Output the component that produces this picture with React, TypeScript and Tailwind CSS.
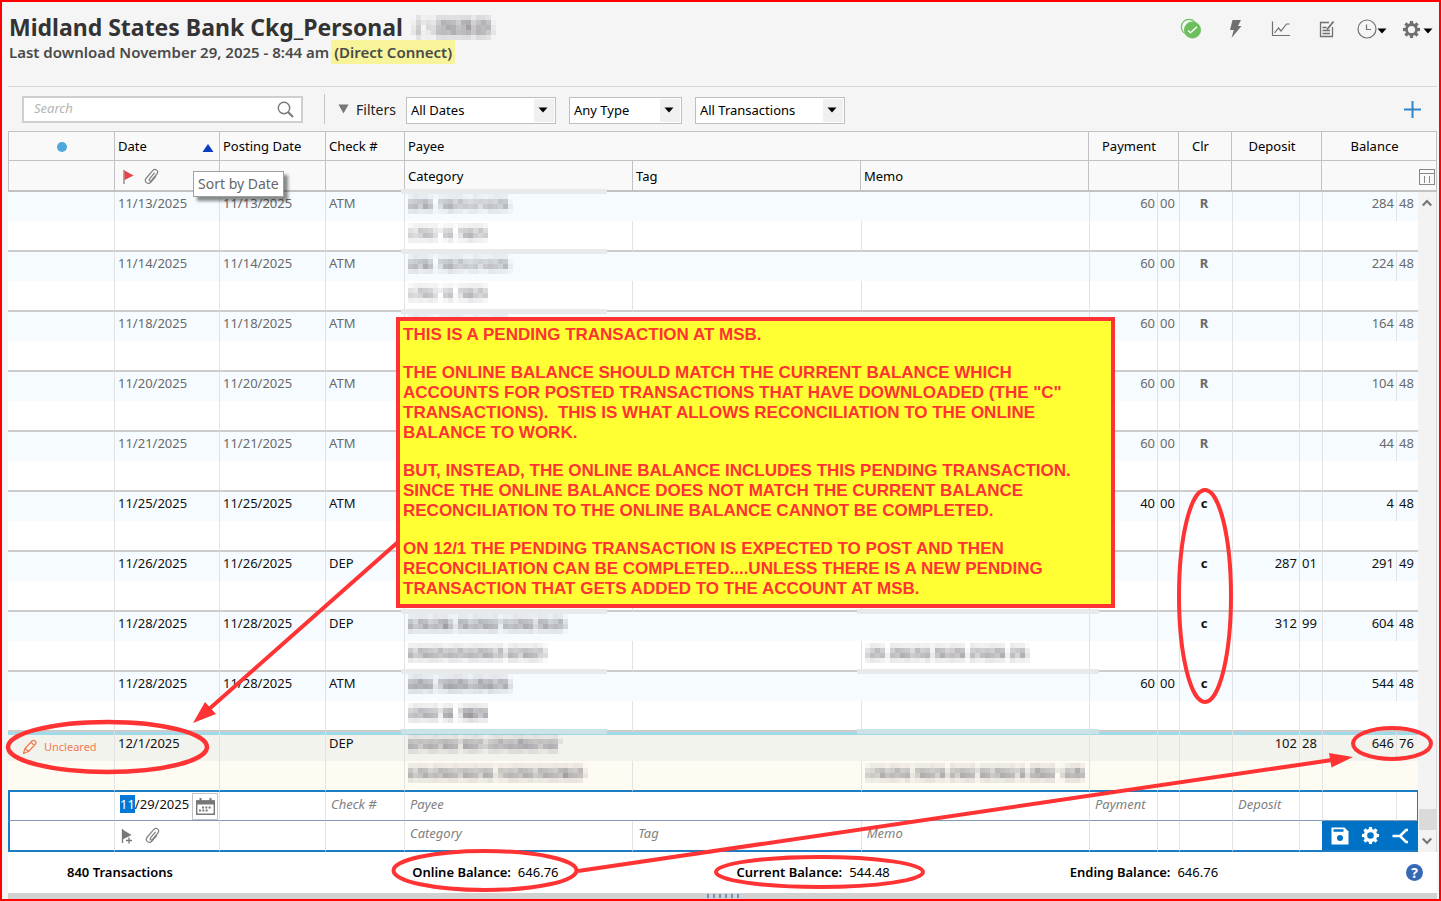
import { useEffect, useRef } from "react";
import type { ReactNode } from "react";

type Transaction = {
  date: string;
  posting: string;
  check: string;
  payee: string;
  category: string;
  memo?: string;
  maskMemo?: boolean;
  payment?: [string, string];
  clr: string;
  deposit?: [string, string];
  balance: [string, string];
};

// one digit per tile, higher is darker
const ATM_PAYEE = "454541345443343344441";
const ATM_CATEGORY = "3344431341345443";

const transactions: Transaction[] = [
  { date: "11/13/2025", posting: "11/13/2025", check: "ATM", payee: ATM_PAYEE, category: ATM_CATEGORY, payment: ["60", "00"], clr: "R", balance: ["284", "48"] },
  { date: "11/14/2025", posting: "11/14/2025", check: "ATM", payee: ATM_PAYEE, category: ATM_CATEGORY, payment: ["60", "00"], clr: "R", balance: ["224", "48"] },
  { date: "11/18/2025", posting: "11/18/2025", check: "ATM", payee: ATM_PAYEE, category: ATM_CATEGORY, payment: ["60", "00"], clr: "R", balance: ["164", "48"] },
  { date: "11/20/2025", posting: "11/20/2025", check: "ATM", payee: ATM_PAYEE, category: ATM_CATEGORY, payment: ["60", "00"], clr: "R", balance: ["104", "48"] },
  { date: "11/21/2025", posting: "11/21/2025", check: "ATM", payee: ATM_PAYEE, category: ATM_CATEGORY, payment: ["60", "00"], clr: "R", balance: ["44", "48"] },
  { date: "11/25/2025", posting: "11/25/2025", check: "ATM", payee: ATM_PAYEE, category: ATM_CATEGORY, payment: ["40", "00"], clr: "c", balance: ["4", "48"] },
  { date: "11/26/2025", posting: "11/26/2025", check: "DEP", payee: ATM_PAYEE, category: ATM_CATEGORY, clr: "c", deposit: ["287", "01"], balance: ["291", "49"] },
  { date: "11/28/2025", posting: "11/28/2025", check: "DEP", payee: "54554556425545555524455553554552", category: "5455555455545555545255455542", memo: "355415555454525545551544555515452", maskMemo: true, clr: "c", deposit: ["312", "99"], balance: ["604", "48"] },
  { date: "11/28/2025", posting: "11/28/2025", check: "ATM", payee: "566552456665456565552", category: "4555552561367655", maskMemo: true, payment: ["60", "00"], clr: "c", balance: ["544", "48"] },
  { date: "12/1/2025", posting: "", check: "DEP", payee: "5544554555255542455455655544551", category: "545545555545554552445555545555565551", memo: "344545545245554525455525545555352565551".slice(0, 39) + "25564", maskMemo: true, clr: "", deposit: ["102", "28"], balance: ["646", "76"] },
];

const TILE = 5;

function Mosaic({ pattern, rows = [0.25, 0.85, 1, 0.3] }: { pattern: string; rows?: number[] }) {
  const tiles = pattern.split("").map(Number);
  return (
    <svg width={tiles.length * TILE} height={rows.length * TILE} className="block" aria-hidden="true" shapeRendering="crispEdges">
      {rows.map((strength, y) =>
        tiles.map((level, x) => (
          <rect
            key={`${x}-${y}`}
            x={x * TILE}
            y={y * TILE}
            width={TILE}
            height={TILE}
            fill="#5a5560"
            opacity={Math.max(0, (level + ((x * 3 + y * 5) % 4) * 0.5 - 1) * 0.085 * strength)}
          />
        ))
      )}
    </svg>
  );
}

function Caret({ className }: { className?: string }) {
  return (
    <svg width="10" height="6" viewBox="0 0 10 6" className={className} aria-hidden="true">
      <path d="M0.5 0.5h9L5 5.5z" fill="currentColor" />
    </svg>
  );
}

function Gear({ size, width = 3 }: { size: number; width?: number }) {
  return (
    <svg width={size} height={size} viewBox="0 0 20 20" stroke="currentColor" fill="none" aria-hidden="true">
      <circle cx="10" cy="10" r="5.3" strokeWidth={width} />
      {[0, 45, 90, 135, 180, 225, 270, 315].map((deg) => (
        <path key={deg} d="M10 1v3.5" strokeWidth="3.4" transform={`rotate(${deg} 10 10)`} />
      ))}
    </svg>
  );
}

function Clip() {
  return (
    <svg width="15" height="17" viewBox="0 0 15 17" fill="none" stroke="#808080" strokeWidth="1.2" strokeLinecap="round" aria-hidden="true">
      <path d="M10.3 5.2L5.6 10.800c-1.200 1.600 0.700 3 1.900 1.600L12.900 6c2.300-3-1.600-6.300-4.200-3.400L2.300 10c-2.900 3.600 1.700 7.400 4.700 4L11.500 8.800" />
    </svg>
  );
}

function FilterSelect({ label, options, width }: { label: string; options: string[]; width: string }) {
  return (
    <div className={`relative ${width}`}>
      <select aria-label={label} className="block h-[27px] w-full appearance-none border border-[#bfbfbf] bg-white pl-1 text-[13px] leading-5 text-black">
        {options.map((o) => (
          <option key={o}>{o}</option>
        ))}
      </select>
      <span className="pointer-events-none absolute inset-y-[2px] right-[2px] flex w-5 items-center justify-center bg-[#f0f0f0]">
        <Caret className="mr-px" />
      </span>
    </div>
  );
}

function ToolButton({ label, children }: { label: string; children: ReactNode }) {
  return (
    <button type="button" aria-label={label} className="flex h-6 items-center text-[#707070]">
      {children}
    </button>
  );
}

function Header() {
  return (
    <header className="flex h-[84px] justify-between pt-3 pr-[6px] pl-[7px]">
      <div>
        <h1 className="flex h-[26px] items-center text-[23px] leading-7 font-bold text-[#333]">
          Midland States Bank Ckg_Personal
          <span className="ml-2 inline-block">
            <Mosaic pattern="14122566656746651" rows={[0.3, 0.75, 0.85, 0.8, 0.3]} />
          </span>
        </h1>
        <p className="flex text-[15px] leading-6 font-semibold text-[#4a4a4a]">
          Last download November 29, 2025 - 8:44 am
          <span className="ml-[2px] bg-[#f7f49a] px-[3px]">(Direct Connect)</span>
        </p>
      </div>
      <div className="flex items-start pt-[3px]">
        <div className="mr-[27px]">
          <ToolButton label="Status">
            <svg width="22" height="22" viewBox="0 0 22 22" fill="none" aria-hidden="true">
              <circle cx="9" cy="9" r="7.700" stroke="#6cbf5b" strokeWidth="1.200" />
              <circle cx="12.500" cy="12" r="8.500" fill="#6cbf5b" />
              <path d="M8 12.500l2.500 2.300 6.500-6" stroke="#fff" strokeWidth="1.400" />
            </svg>
          </ToolButton>
        </div>
        <div className="mr-[29px]">
          <ToolButton label="Update now">
            <svg width="13" height="20" viewBox="0 0 13 20" fill="currentColor" aria-hidden="true">
              <path d="M3.500 1h8.500L9 7h3.500L2.500 19l2.300-8H1z" />
            </svg>
          </ToolButton>
        </div>
        <div className="mr-[28px]">
          <ToolButton label="Reports">
            <svg width="20" height="16" viewBox="0 0 20 16" fill="none" stroke="currentColor" strokeWidth="1.200" aria-hidden="true">
              <path d="M1.500 0.500v14h17.500M3.500 12l4-5 2.500 3 5.500-7h3" />
            </svg>
          </ToolButton>
        </div>
        <div className="mr-[22px]">
          <ToolButton label="Notes">
            <svg width="16" height="18" viewBox="0 0 16 18" fill="none" stroke="currentColor" strokeWidth="1.300" aria-hidden="true">
              <path d="M10 2.500H1.500v14h12V7M3.500 7.500h4M3.500 10.500h7.500M3.500 13.500h7.500" />
              <path d="M8 9.500l6.500-8" strokeWidth="1.800" />
            </svg>
          </ToolButton>
        </div>
        <div className="mr-[15px]">
          <ToolButton label="Reminders">
            <svg width="20" height="20" viewBox="0 0 20 20" fill="none" stroke="currentColor" strokeWidth="1.200" aria-hidden="true">
              <circle cx="10" cy="10" r="9" />
              <path d="M9.500 5.500v5h4.500" />
            </svg>
            <Caret className="mt-1 text-black" />
          </ToolButton>
        </div>
        <ToolButton label="Account actions">
          <Gear size={19} />
          <Caret className="mt-1 ml-[2px] text-black" />
        </ToolButton>
      </div>
    </header>
  );
}

function Toolbar() {
  return (
    <div className="flex h-[45px] items-center border-t border-[#d6d6d6] pr-4 pl-[14px]">
      <div className="flex h-[27px] w-[281px] items-center border-2 border-[#cfcfcf] bg-white pr-[7px] pl-[10px]">
        <input type="text" aria-label="Search" placeholder="Search" className="min-w-0 flex-1 text-[13px] outline-none placeholder:text-[#b4b4b4] placeholder:italic" />
        <svg width="17" height="17" viewBox="0 0 17 17" fill="none" stroke="#777" aria-hidden="true">
          <circle cx="7" cy="7" r="5.700" strokeWidth="1.400" />
          <path d="M11 11l5 5" strokeWidth="2" />
        </svg>
      </div>
      <div className="ml-[21px] h-[30px] w-px bg-[#c4c4c4]" />
      <button type="button" className="mr-[10px] ml-[13px] flex items-center gap-[7px] text-[14px] text-[#222]">
        <svg width="11" height="10" viewBox="0 0 11 10" aria-hidden="true">
          <path d="M0.500 0.500h10L5.500 9.500z" fill="#777" />
        </svg>
        Filters
      </button>
      <div className="flex gap-[13px] pt-[2px]">
        <FilterSelect label="Dates" options={["All Dates"]} width="w-[150px]" />
        <FilterSelect label="Type" options={["Any Type"]} width="w-[113px]" />
        <FilterSelect label="Transactions" options={["All Transactions"]} width="w-[150px]" />
      </div>
      <button type="button" aria-label="Add transaction" className="ml-auto">
        <svg width="17" height="17" viewBox="0 0 17 17" stroke="#2f86cc" strokeWidth="2" aria-hidden="true">
          <path d="M8.500 0v17M0 8.500h17" />
        </svg>
      </button>
    </div>
  );
}

function Columns({ wideBalance }: { wideBalance?: boolean }) {
  return (
    <colgroup>
      <col className="w-[106px]" />
      <col className="w-[105px]" />
      <col className="w-[106px]" />
      <col className="w-[79px]" />
      <col />
      <col />
      <col />
      <col className="w-[68px]" />
      <col className="w-[22px]" />
      <col className="w-[53px]" />
      <col className="w-[67px]" />
      <col className="w-[23px]" />
      <col className="w-[74px]" />
      <col className={wideBalance ? "w-[41px]" : "w-[22px]"} />
    </colgroup>
  );
}

const headCell = "h-[29px] border-l border-t border-[#c2c2c2] bg-[#f9f9f9] px-[3px] pt-[2px] font-normal";

function RegisterHead() {
  return (
    <table className="w-full table-fixed border-separate border-spacing-0 border-r border-[#c2c2c2] text-left text-[13px] text-black">
      <Columns wideBalance />
      <thead>
        <tr>
          <th aria-label="Status" className={headCell}>
            <span className="mx-auto block size-[10px] rounded-full bg-[#4fa8dc]" />
          </th>
          <th className={`${headCell} relative`}>
            <button type="button" className="flex w-full items-center justify-between pr-[2px]">
              Date
              <svg width="12" height="8" viewBox="0 0 12 8" className="mt-[2px]" aria-hidden="true">
                <path d="M0.500 8L6 0l5.500 8z" fill="#0a3cc0" />
              </svg>
            </button>
            <span role="tooltip" className="absolute top-[39px] left-[78px] z-20 border border-[#a0a0a0] bg-white px-1 text-[14px] leading-6 whitespace-nowrap text-[#666] shadow-[4px_4px_3px_rgba(0,0,0,0.45)]">
              Sort by Date
            </span>
          </th>
          <th className={headCell}>Posting Date</th>
          <th className={headCell}>Check #</th>
          <th className={headCell} colSpan={3}>Payee</th>
          <th className={`${headCell} pr-3 text-center`} colSpan={2}>Payment</th>
          <th className={`${headCell} pr-3 text-center`}>Clr</th>
          <th className={`${headCell} pr-3 text-center`} colSpan={2}>Deposit</th>
          <th className={`${headCell} pr-3 text-center`} colSpan={2}>Balance</th>
        </tr>
        <tr className="[&>th]:h-8 [&>th]:border-b-2">
          <th className={headCell} />
          <th className={headCell}>
            <span className="flex items-center gap-[10px] pl-[5px]">
              <svg width="11" height="15" viewBox="0 0 11 15" aria-hidden="true">
                <path d="M1 1v14" stroke="#888" strokeWidth="1.400" />
                <path d="M1.500 1.500L10.500 6.500l-9 4.500z" fill="#e8434a" />
              </svg>
              <Clip />
            </span>
          </th>
          <th className={headCell} />
          <th className={headCell} />
          <th className={headCell}>Category</th>
          <th className={headCell}>Tag</th>
          <th className={headCell}>Memo</th>
          <th className={headCell} colSpan={2} />
          <th className={headCell} />
          <th className={headCell} colSpan={2} />
          <th className={`${headCell} pr-px`} colSpan={2}>
            <button type="button" aria-label="Choose columns" className="ml-auto block">
              <svg width="16" height="16" viewBox="0 0 16 16" fill="none" stroke="#888" shapeRendering="crispEdges" aria-hidden="true">
                <path d="M0.500 0.500h15v15H0.500zM1 4.500h14M5.500 6.500v7M10.500 6.500v7" />
              </svg>
            </button>
          </th>
        </tr>
      </thead>
    </table>
  );
}

function TransactionRows({ item, pending, last }: { item: Transaction; pending: boolean; last: boolean }) {
  const cleared = item.clr === "R";
  const top = pending ? "bg-[#f3f3ee] [&>td]:shadow-[inset_0_3px_0_#9fdae8]" : "bg-[#f5fbfe]";
  const bottom = pending ? "bg-[#fefbf2]" : "bg-white";
  const line = last ? "[&>td]:border-b-[#1b7cc4]" : "[&>td]:border-b-[#cccccc]";
  const mask = pending ? "bg-[#cbe3e8]" : "bg-[#e7e9eb]";
  const cell = "border-l border-[#e2e2e2] align-top";
  return (
    <>
      <tr className={`h-[29px] leading-[22px] ${top} ${cleared ? "text-[#6a6a6a]" : "text-[#111]"}`}>
        <td className="align-middle">
          {pending && (
            <span className="flex items-center gap-[6px] pl-[14px] text-[11px] text-[#f47a52]">
              <svg width="16" height="16" viewBox="0 0 16 16" fill="none" stroke="currentColor" strokeWidth="1.300" strokeLinejoin="round" aria-hidden="true">
                <path d="M1.500 14.500l1.500-5 7-7.500c2-1.800 5 0.800 3.500 3L6.500 12.500zM3 9.500l3.500 3M9 3.500l3.500 3" />
              </svg>
              Uncleared
            </span>
          )}
        </td>
        <td className={`${cell} pl-[3px]`}>{item.date}</td>
        <td className={`${cell} pl-[3px]`}>{item.posting}</td>
        <td className={`${cell} pl-[3px]`}>{item.check}</td>
        <td className={`${cell} relative pt-[2px] pl-[3px]`} colSpan={3}>
          <span className={`absolute top-[-3px] left-[-4px] h-[5px] w-[206px] ${mask}`} />
          {item.maskMemo && <span className={`absolute top-[-3px] right-[-10px] h-[5px] w-[242px] ${mask}`} />}
          <div className="relative">
            <Mosaic pattern={item.payee} />
          </div>
        </td>
        <td className={`${cell} pr-[2px] text-right`}>{item.payment?.[0]}</td>
        <td className={`${cell} pl-[2px]`}>{item.payment?.[1]}</td>
        <td className={`${cell} pr-1 text-center font-bold`}>{item.clr}</td>
        <td className={`${cell} pr-[2px] text-right`}>{item.deposit?.[0]}</td>
        <td className={`${cell} pl-[2px]`}>{item.deposit?.[1]}</td>
        <td className={`${cell} pr-[2px] text-right`}>{item.balance[0]}</td>
        <td className={`${cell} pl-[2px]`}>{item.balance[1]}</td>
      </tr>
      <tr className={`h-[31px] ${bottom} [&>td]:border-b-2 ${line}`}>
        <td />
        <td className={cell} />
        <td className={cell} />
        <td className={cell} />
        <td className={`${cell} pt-[2px] pl-[3px]`}>
          <Mosaic pattern={item.category} />
        </td>
        <td className={cell} />
        <td className={`${cell} pt-[2px] pl-[3px]`}>{item.memo && <Mosaic pattern={item.memo} />}</td>
        <td className={cell} />
        <td className={cell} />
        <td className={cell} />
        <td className={cell} />
        <td className={cell} />
        <td className={cell} colSpan={2} />
      </tr>
    </>
  );
}

function EntryField({ label }: { label: string }) {
  return (
    <input type="text" aria-label={label} placeholder={label} className="block h-6 w-full pl-[5px] text-[13px] italic outline-none placeholder:text-[#808080]" />
  );
}

function EntryRows() {
  const dateRef = useRef<HTMLInputElement>(null);

  useEffect(() => {
    dateRef.current?.focus();
    dateRef.current?.setSelectionRange(0, 2);
  }, []);

  const cell = "border-l border-[#e2e2e2] align-top";
  return (
    <>
      <tr className="h-[29px] bg-white [&>td]:border-b [&>td]:border-b-[#8499b8]">
        <td className="border-l-2 border-l-[#1b7cc4]" />
        <td className={cell}>
          <div className="flex">
            <input ref={dateRef} type="text" aria-label="Entry date" defaultValue="11/29/2025" className="h-6 w-[77px] pl-[5px] text-[13px] text-[#111] outline-none selection:bg-[#0078d7] selection:text-white" />
            <button type="button" aria-label="Open calendar" className="mt-px flex h-[27px] w-[26px] items-center justify-center border border-[#c4c4c4] bg-white">
              <svg width="19" height="17" viewBox="0 0 19 17" fill="none" stroke="#777" aria-hidden="true">
                <path d="M0.700 3h17.600v13.200H0.700z" strokeWidth="1.400" />
                <path d="M0 4.500h19" strokeWidth="4" />
                <path d="M4.500 0v3M14.500 0v3" strokeWidth="2" />
                <path d="M6 9.500h10M3 12.500h10" strokeWidth="2" strokeDasharray="2 1.300" />
              </svg>
            </button>
          </div>
        </td>
        <td className={cell} />
        <td className={cell}><EntryField label="Check #" /></td>
        <td className={cell} colSpan={3}><EntryField label="Payee" /></td>
        <td className={cell}><EntryField label="Payment" /></td>
        <td className={cell} />
        <td className={cell} />
        <td className={cell}><EntryField label="Deposit" /></td>
        <td className={cell} />
        <td className={cell} />
        <td className={`${cell} border-r border-r-[#1b7cc4]`} />
      </tr>
      <tr className="h-[31px] bg-white [&>td]:border-b-2 [&>td]:border-b-[#1b7cc4]">
        <td className="border-l-2 border-l-[#1b7cc4]" />
        <td className="border-l border-l-[#e2e2e2]">
          <span className="flex items-center gap-3 pl-[6px]">
            <button type="button" aria-label="Flag">
              <svg width="12" height="16" viewBox="0 0 12 16" aria-hidden="true">
                <path d="M1.500 1v14" stroke="#777" strokeWidth="1.300" />
                <path d="M1.500 1.500L10.500 7l-9 4.500z" fill="#777" />
                <path d="M8 9.500v6M5 12.500h6" stroke="#777" strokeWidth="1.300" />
              </svg>
            </button>
            <button type="button" aria-label="Attach">
              <Clip />
            </button>
          </span>
        </td>
        <td className={cell} />
        <td className={cell} />
        <td className={cell}><EntryField label="Category" /></td>
        <td className={cell}><EntryField label="Tag" /></td>
        <td className={cell}><EntryField label="Memo" /></td>
        <td className={cell} />
        <td className={cell} />
        <td className={cell} />
        <td className={cell} />
        <td className={cell} />
        <td className="bg-[#0072c6]" colSpan={2}>
          <div className="flex items-center justify-around px-[3px] text-white">
            <button type="button" aria-label="Save">
              <svg width="18" height="18" viewBox="0 0 18 18" aria-hidden="true">
                <path d="M0.500 0.500h13l4 4v13H0.500z" fill="currentColor" />
                <path d="M2.500 3.500h10" stroke="#0072c6" strokeWidth="2.500" />
                <circle cx="9" cy="11" r="3" fill="#0072c6" />
              </svg>
            </button>
            <button type="button" aria-label="More actions">
              <Gear size={19} width={3.6} />
            </button>
            <button type="button" aria-label="Split">
              <svg width="17" height="16" viewBox="0 0 17 16" fill="none" stroke="currentColor" strokeWidth="2.600" aria-hidden="true">
                <path d="M0.500 8H9M16 2h-2L8 8l6 6H16" />
              </svg>
            </button>
          </div>
        </td>
      </tr>
    </>
  );
}

function ScrollBar() {
  return (
    <div className="flex w-[19px] flex-col items-center border-r border-[#d8d8d8] bg-[#f3f3f3] py-[7px]" aria-hidden="true">
      <svg width="10" height="8" viewBox="0 0 10 8" fill="none" stroke="#777" strokeWidth="2.200">
        <path d="M0.800 6.500L5 2l4.200 4.500" />
      </svg>
      <div className="mt-auto h-[21px] w-[17px] bg-[#dadada]" />
      <svg width="10" height="8" viewBox="0 0 10 8" fill="none" stroke="#777" strokeWidth="2.200" className="mt-[7px]">
        <path d="M0.800 1.500L5 6l4.200-4.500" />
      </svg>
    </div>
  );
}

function Footer() {
  return (
    <footer className="grid h-[41px] grid-cols-[346fr_325fr_334fr_337fr_auto] items-center bg-white pr-[14px] pl-[59px] text-[13px] text-black">
      <span className="font-semibold">840 Transactions</span>
      <span><b className="mr-[7px] font-semibold">Online Balance:</b>646.76</span>
      <span><b className="mr-[7px] font-semibold">Current Balance:</b>544.48</span>
      <span><b className="mr-[7px] font-semibold">Ending Balance:</b>646.76</span>
      <button type="button" aria-label="Help" className="size-[17px] rounded-full bg-[#3569b5] text-center text-[14px] leading-[17px] font-bold text-white">?</button>
    </footer>
  );
}

const notes = [
  ["THIS IS A PENDING TRANSACTION AT MSB."],
  [
    "THE ONLINE BALANCE SHOULD MATCH THE CURRENT BALANCE WHICH",
    "ACCOUNTS FOR POSTED TRANSACTIONS THAT HAVE DOWNLOADED (THE \"C\"",
    "TRANSACTIONS).  THIS IS WHAT ALLOWS RECONCILIATION TO THE ONLINE",
    "BALANCE TO WORK.",
  ],
  [
    "BUT, INSTEAD, THE ONLINE BALANCE INCLUDES THIS PENDING TRANSACTION.",
    "SINCE THE ONLINE BALANCE DOES NOT MATCH THE CURRENT BALANCE",
    "RECONCILIATION TO THE ONLINE BALANCE CANNOT BE COMPLETED.",
  ],
  [
    "ON 12/1 THE PENDING TRANSACTION IS EXPECTED TO POST AND THEN",
    "RECONCILIATION CAN BE COMPLETED....UNLESS THERE IS A NEW PENDING",
    "TRANSACTION THAT GETS ADDED TO THE ACCOUNT AT MSB.",
  ],
];

function Annotations() {
  return (
    <div className="pointer-events-none absolute -top-[2px] -left-[2px] z-30">
      <svg width="1441" height="901" viewBox="0 0 1441 901" fill="none" stroke="#ff3333" strokeWidth="4" className="block" aria-hidden="true">
        <ellipse cx="107.500" cy="747" rx="99.500" ry="25" strokeWidth="4.500" />
        <ellipse cx="1392" cy="743.500" rx="39" ry="15.500" />
        <ellipse cx="1205" cy="596" rx="26" ry="106" />
        <ellipse cx="485" cy="870.500" rx="91.500" ry="19.500" />
        <ellipse cx="819.500" cy="872" rx="103.500" ry="15" />
        <path d="M398 542L208 710M578 871L1332 760" />
        <path d="M193 723l12-21 11 12zM1353 757l-24-4 2.500 14.500z" fill="#ff3333" stroke="none" />
      </svg>
      <div className="absolute top-[317px] left-[396px] flex h-[291px] w-[719px] flex-col gap-[18px] border-4 border-[#ff3333] bg-[#ffff33] px-[3px] pt-1 font-['Liberation_Sans',Arial,sans-serif] text-[17px] leading-5 font-bold whitespace-pre text-[#ff3333]">
        {notes.map((lines) => (
          <p key={lines[0]}>{lines.join("\n")}</p>
        ))}
      </div>
    </div>
  );
}

export default function App() {
  return (
    <div className="relative border-2 border-[#ff0000] bg-[#f5f5f5] font-['Noto_Sans','Open_Sans',sans-serif]">
      <Header />
      <main className="mr-[2px] ml-[6px]">
        <Toolbar />
        <RegisterHead />
        <div className="flex">
          <div className="min-w-0 flex-1">
            <table className="w-full table-fixed border-separate border-spacing-0 text-[13px]">
              <Columns />
              <tbody>
                {transactions.map((item, i) => (
                  <TransactionRows
                    key={`${item.date}-${item.balance[0]}`}
                    item={item}
                    pending={item.clr === ""}
                    last={i === transactions.length - 1}
                  />
                ))}
                <EntryRows />
              </tbody>
            </table>
          </div>
          <ScrollBar />
        </div>
        <Footer />
        <div className="flex h-[6px] items-center justify-center gap-1 bg-[#d2d2d2]">
          {[0, 1, 2, 3, 4, 5].map((n) => (
            <span key={n} className="h-1 w-[2px] bg-[#6f93b8]" />
          ))}
        </div>
      </main>
      <Annotations />
    </div>
  );
}
